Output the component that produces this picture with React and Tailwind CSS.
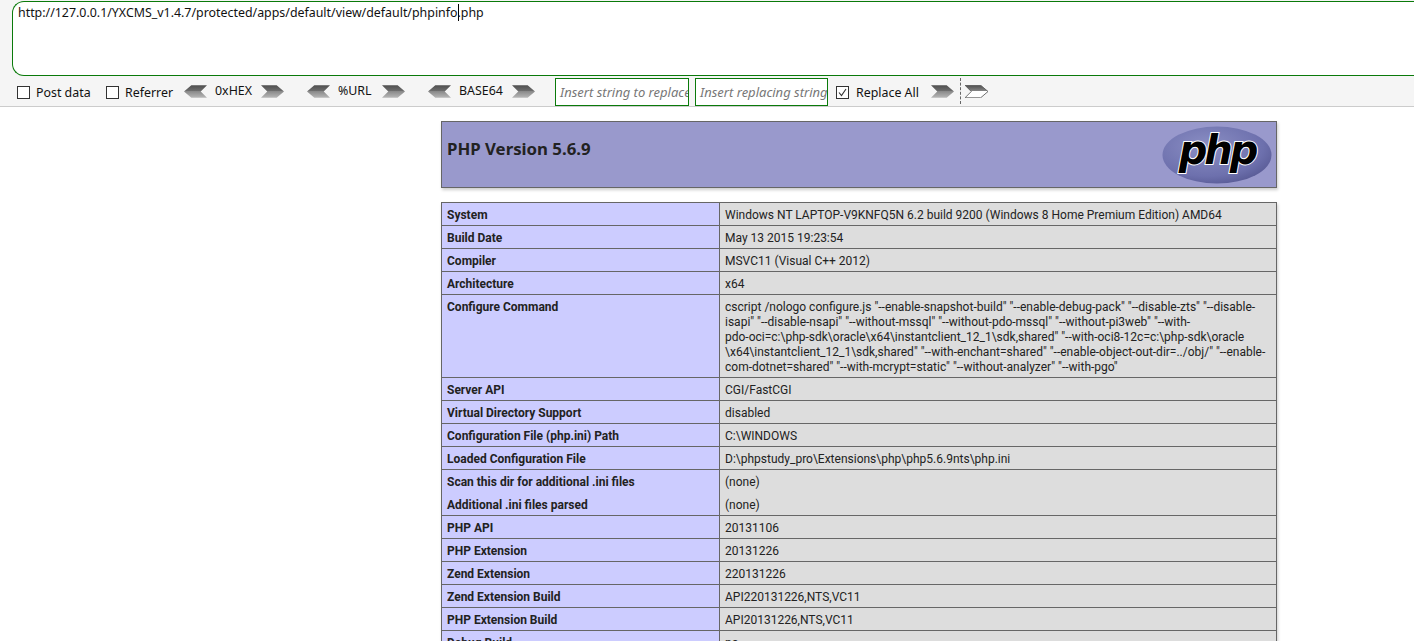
import React from 'react';

const rows = [
  ['System', 'Windows NT LAPTOP-V9KNFQ5N 6.2 build 9200 (Windows 8 Home Premium Edition) AMD64'],
  ['Build Date', 'May 13 2015 19:23:54'],
  ['Compiler', 'MSVC11 (Visual C++ 2012)'],
  ['Architecture', 'x64'],
  ['Configure Command', 'cscript /nologo configure.js "--enable-snapshot-build" "--enable-debug-pack" "--disable-zts" "--disable-\nisapi" "--disable-nsapi" "--without-mssql" "--without-pdo-mssql" "--without-pi3web" "--with-\npdo-oci=c:\\php-sdk\\oracle\\x64\\instantclient_12_1\\sdk,shared" "--with-oci8-12c=c:\\php-sdk\\oracle\n\\x64\\instantclient_12_1\\sdk,shared" "--with-enchant=shared" "--enable-object-out-dir=../obj/" "--enable-\ncom-dotnet=shared" "--with-mcrypt=static" "--without-analyzer" "--with-pgo"'],
  ['Server API', 'CGI/FastCGI'],
  ['Virtual Directory Support', 'disabled'],
  ['Configuration File (php.ini) Path', 'C:\\WINDOWS'],
  ['Loaded Configuration File', 'D:\\phpstudy_pro\\Extensions\\php\\php5.6.9nts\\php.ini'],
  ['Scan this dir for additional .ini files', '(none)', true],
  ['Additional .ini files parsed', '(none)', true],
  ['PHP API', '20131106'],
  ['PHP Extension', '20131226'],
  ['Zend Extension', '220131226'],
  ['Zend Extension Build', 'API220131226,NTS,VC11'],
  ['PHP Extension Build', 'API20131226,NTS,VC11'],
  ['Debug Build', 'no'],
];

function Chevron({ dir, white }) {
  const id = (dir === 'left' ? 'cl' : 'cr') + (white ? 'w' : '');
  const pts = dir === 'left' ? '7,0 22,0 16,6 22,12 7,12 0,6' : '0,0 15,0 22,6 15,12 0,12 6,6';
  return (
    <svg width="23" height="13" viewBox="0 0 22 12" className="shrink-0">
      <defs>
        <linearGradient id={id} x1="0" y1="0" x2="0" y2="1">
          <stop offset="0" stopColor="#4f4f4f" />
          <stop offset="0.5" stopColor={white ? '#8a8a8a' : '#707070'} />
          <stop offset="0.5" stopColor={white ? '#fff' : '#8a8a8a'} />
          <stop offset="1" stopColor={white ? '#fff' : '#b8b8b8'} />
        </linearGradient>
      </defs>
      <polygon points={pts} fill={`url(#${id})`} stroke={white ? '#555' : 'none'} strokeWidth="0.8" />
    </svg>
  );
}

function Check({ checked }) {
  return (
    <span className="mt-[3px] w-[13px] h-[13px] border border-[#333] bg-white flex items-center justify-center shrink-0">
      {checked && (
        <svg width="11" height="11" viewBox="0 0 11 11">
          <path d="M2 5.5 L4.500 8.500 L9 2" fill="none" stroke="#333" strokeWidth="1.1" />
        </svg>
      )}
    </span>
  );
}

function PhpLogo() {
  return (
    <svg width="110" height="58" viewBox="0 0 110 58">
      <defs>
        <radialGradient id="ph" cx="0.4" cy="0.35" r="0.75">
          <stop offset="0" stopColor="#8b8fc4" />
          <stop offset="0.7" stopColor="#6d70ad" />
          <stop offset="1" stopColor="#53558f" />
        </radialGradient>
      </defs>
      <ellipse cx="55" cy="29" rx="54.500" ry="28.500" fill="url(#ph)" />
      <text x="55" y="38" textAnchor="middle" fontFamily="'DejaVu Sans', sans-serif" fontWeight="700" fontStyle="italic" fontSize="40" letterSpacing="-3" fill="#000" stroke="#fff" strokeWidth="2" paintOrder="stroke">php</text>
    </svg>
  );
}

export default function App() {
  return (
    <div className="h-[641px] w-[1414px] overflow-hidden bg-white font-['Roboto',sans-serif] text-[12px] text-[#222]">
      {/* hackbar */}
      <div className="h-[107px] bg-[#f5f5f5] border-b border-[#ccc] pt-px font-['Noto_Sans',sans-serif] text-[12.400px]">
        <div className="ml-3 h-[75px] bg-white border border-r-0 border-[#0a7a0a] rounded-l-xl pl-[5px] pt-[1px] leading-5 text-[#111]">
          http://127.0.0.1/YXCMS_v1.4.7/protected/apps/default/view/default/phpinfo<span className="border-l border-black -mr-px"></span>.php
        </div>
        <div className="flex items-center h-[30px] pl-[17px] text-[#111]">
          <Check /><span className="mt-[4px] ml-[6px] w-[70px]">Post data</span>
          <Check /><span className="mt-[4px] ml-[6px] w-[59px]">Referrer</span>
          <Chevron dir="left" /><span className="mt-px ml-[8px] w-[46px]">0xHEX</span><Chevron dir="right" />
          <span className="w-[23px]" />
          <Chevron dir="left" /><span className="mt-px ml-[8px] w-[44px]">%URL</span><Chevron dir="right" />
          <span className="w-[23px]" />
          <Chevron dir="left" /><span className="mt-px ml-[8px] w-[53px]">BASE64</span><Chevron dir="right" />
          <span className="w-[20px]" />
          <div className="mt-[2px] w-[134px] h-[28px] bg-white border border-[#0a7a0a] flex items-center pl-1 pt-[2px] overflow-hidden whitespace-nowrap italic text-[13px] text-[#777]">Insert string to replace</div>
          <div className="mt-[2px] ml-[6px] w-[133px] h-[28px] bg-white border border-[#0a7a0a] flex items-center pl-1 pt-[2px] overflow-hidden whitespace-nowrap italic text-[13px] text-[#777]">Insert replacing string</div>
          <span className="ml-2"><Check checked /></span>
          <span className="mt-[4px] ml-[7px] w-[75px]">Replace All</span>
          <Chevron dir="right" />
          <span className="ml-[6px] h-[26px] border-l border-dashed border-[#666]" />
          <span className="ml-[4px] flex"><Chevron dir="right" white /></span>
        </div>
      </div>

      {/* phpinfo */}
      <div className="w-[836px] ml-[441px] mt-[14px]">
        <div className="h-[67px] bg-[#9999cc] border border-[#666] shadow-[1px_2px_3px_#ccc] flex justify-between pl-[5px] pr-[4px]">
          <h1 className="text-[16.800px] font-bold leading-none mt-[19px] font-['Noto_Sans',sans-serif]">PHP Version 5.6.9</h1>
          <div className="mt-[4px]"><PhpLogo /></div>
        </div>
        <table className="mt-[14px] w-[836px] border-collapse table-fixed shadow-[1px_2px_3px_#ccc]">
          <colgroup>
            <col className="w-[278px]" />
            <col />
          </colgroup>
          <tbody>
            {rows.map(([k, v, open], i) => (
              <tr key={k} className="align-top">
                <td className={`bg-[#ccccff] border border-[#666] px-[5px] pt-[5px] pb-[2px] h-[23px] leading-[15px] font-bold ${open ? 'border-b-0' : ''} ${i === 10 ? 'border-t-0' : ''}`}>{k}</td>
                <td className={`bg-[#dddddd] border border-[#666] px-[5px] pt-[5px] pb-[2px] h-[23px] leading-[15px] whitespace-pre-line ${open ? 'border-b-0' : ''} ${i === 10 ? 'border-t-0' : ''}`}>{v}</td>
              </tr>
            ))}
          </tbody>
        </table>
      </div>
    </div>
  );
}
